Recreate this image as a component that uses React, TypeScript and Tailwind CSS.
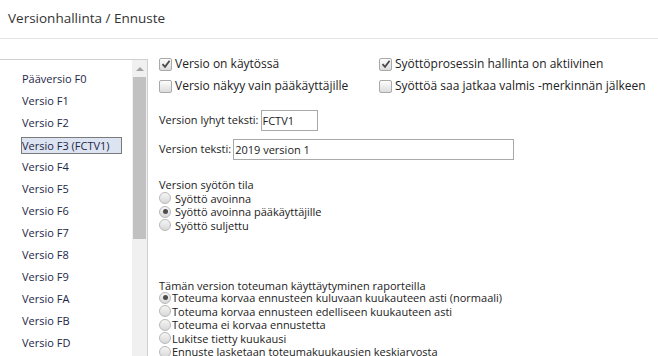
const versions = [
  "Pääversio F0",
  "Versio F1",
  "Versio F2",
  "Versio F3 (FCTV1)",
  "Versio F4",
  "Versio F5",
  "Versio F6",
  "Versio F7",
  "Versio F8",
  "Versio F9",
  "Versio FA",
  "Versio FB",
  "Versio FD",
];

const Check = ({ checked }: { checked?: boolean }) => (
  <span className="relative inline-flex h-[13px] w-[13px] shrink-0 items-center justify-center rounded-[2px] border border-[#a9a9a9] bg-gradient-to-b from-[#fdfdfd] to-[#dcdcdc]">
    {checked && (
      <svg width="10" height="10" viewBox="0 0 10 10">
        <path d="M1.5 5.2 L4 7.8 L8.6 1.8" fill="none" stroke="#4a4a4a" strokeWidth="1.8" />
      </svg>
    )}
  </span>
);

const Radio = ({ checked }: { checked?: boolean }) => (
  <span className="inline-flex h-[12px] w-[12px] shrink-0 items-center justify-center rounded-full border border-[#b8b8b8] bg-gradient-to-b from-[#f6f6f6] to-[#d8d8d8]">
    {checked && <span className="h-[5px] w-[5px] rounded-full bg-[#4d4d4d]" />}
  </span>
);

const CheckRow = ({ label, checked }: { label: string; checked?: boolean }) => (
  <label className="flex h-[22px] items-center gap-[3px]">
    <Check checked={checked} />
    <span>{label}</span>
  </label>
);

const RadioRow = ({ label, checked, gap }: { label: string; checked?: boolean; gap: string }) => (
  <label className={`flex h-[13.5px] items-center ${gap}`}>
    <Radio checked={checked} />
    <span>{label}</span>
  </label>
);

export default function App() {
  return (
    <div
      className="h-[356px] w-[658px] overflow-hidden bg-white text-[12px] text-[#222]"
      style={{ fontFamily: '"Open Sans", "Liberation Sans", sans-serif' }}
    >
      <div className="flex h-[39px] items-center border-b border-[#e3e3e3] px-2 pb-[2px] text-[13.5px] text-[#333]">
        Versionhallinta / Ennuste
      </div>

      <div className="flex items-start">
        {/* versions list */}
        <div className="mt-[20px] flex h-[300px] w-[148px] shrink-0 border-t border-r border-[#cfcfcf]">
          <ul className="w-[132px] pt-[8px] pl-[22px] text-[11px] text-[#1d2747]">
            {versions.map((v) => (
              <li key={v} className="flex h-[22px] items-center">
                {v.includes("F3") ? (
                  <span className="-ml-px w-[101px] border border-[#7a7a7a] bg-[#dde4f1] leading-[15px]">{v}</span>
                ) : (
                  <span>{v}</span>
                )}
              </li>
            ))}
          </ul>
          <div className="flex w-[15px] flex-col items-center bg-[#f0f0f0]">
            <div className="flex h-[17px] items-center justify-center">
              <span className="h-0 w-0 border-x-[4px] border-b-[4px] border-x-transparent border-b-[#a3a3a3]" />
            </div>
            <div className="h-[162px] w-[13px] bg-[#c1c1c1]" />
          </div>
        </div>

        {/* settings */}
        <div className="flex-1 pt-[14px] pl-[11px]">
          <div className="flex">
            <div className="w-[220px]">
              <CheckRow label="Versio on käytössä" checked />
              <CheckRow label="Versio näkyy vain pääkäyttäjille" />
            </div>
            <div>
              <CheckRow label="Syöttöprosessin hallinta on aktiivinen" checked />
              <CheckRow label="Syöttöä saa jatkaa valmis -merkinnän jälkeen" />
            </div>
          </div>

          <div className="mt-[13px] flex h-[21px] items-center text-[11px]">
            <span>Version lyhyt teksti:</span>
            <input
              readOnly
              value="FCTV1"
              className="ml-[2px] h-[21px] w-[57px] border border-[#a9a9a9] px-[1px] text-[11px] text-[#222] outline-none"
            />
          </div>

          <div className="mt-[8px] flex h-[21px] items-center text-[11px]">
            <span>Version teksti:</span>
            <input
              readOnly
              value="2019 version 1"
              className="ml-[2px] h-[21px] w-[281px] border border-[#a9a9a9] px-[1px] text-[11px] text-[#222] outline-none"
            />
          </div>

          <div className="mt-[18px] text-[11px] leading-[13.5px]">
            <div className="h-[13.5px]">Version syötön tila</div>
            <RadioRow label="Syöttö avoinna" gap="gap-[4px]" />
            <RadioRow label="Syöttö avoinna pääkäyttäjille" checked gap="gap-[4px]" />
            <RadioRow label="Syöttö suljettu" gap="gap-[4px]" />
          </div>

          <div className="mt-[48px] text-[11px] leading-[13.5px]">
            <div className="h-[11px] leading-[11px]">Tämän version toteuman käyttäytyminen raporteilla</div>
            <RadioRow label="Toteuma korvaa ennusteen kuluvaan kuukauteen asti (normaali)" checked gap="gap-[1px]" />
            <RadioRow label="Toteuma korvaa ennusteen edelliseen kuukauteen asti" gap="gap-[1px]" />
            <RadioRow label="Toteuma ei korvaa ennustetta" gap="gap-[1px]" />
            <RadioRow label="Lukitse tietty kuukausi" gap="gap-[1px]" />
            <RadioRow label="Ennuste lasketaan toteumakuukausien keskiarvosta" gap="gap-[1px]" />
          </div>
        </div>
      </div>
    </div>
  );
}
